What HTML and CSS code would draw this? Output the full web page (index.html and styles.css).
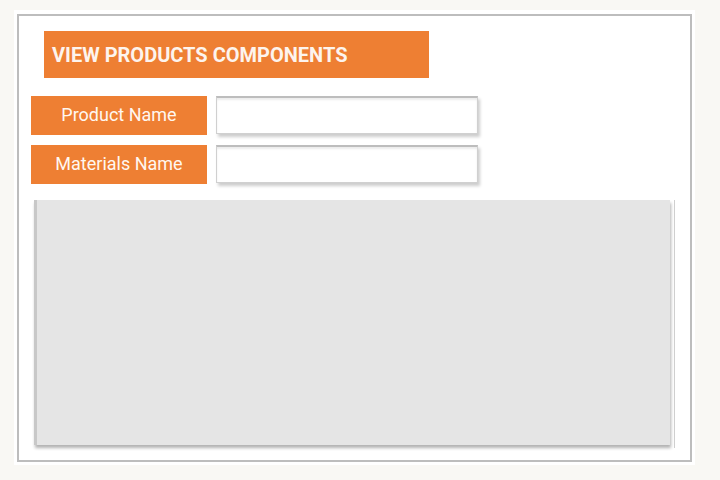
FILE: index.html
```html
<!DOCTYPE html>
<html>
<head>
<meta charset="utf-8">
<link rel="stylesheet" href="styles.css">
</head>
<body>
<div class="frame">
  <div class="panel">
    <div class="title">VIEW PRODUCTS COMPONENTS</div>
    <div class="rows">
      <div class="row">
        <div class="label">Product Name</div>
        <div class="input"></div>
      </div>
      <div class="row">
        <div class="label">Materials Name</div>
        <div class="input"></div>
      </div>
    </div>
    <div class="grid-wrap">
      <div class="grid"></div>
    </div>
  </div>
</div>
</body>
</html>
```

FILE: styles.css
```css
html, body {
  margin: 0;
  padding: 0;
}
body {
  background: #f9f8f4;
  width: 720px;
  height: 480px;
  overflow: hidden;
  font-family: Roboto, "Liberation Sans", sans-serif;
}
.frame {
  margin: 10px 0 0 14px;
  width: 681px;
  height: 455px;
  background: #ffffff;
  padding: 4px 3px 3px 3px;
  box-sizing: border-box;
}
.panel {
  height: 100%;
  border: 2px solid #bdbdbd;
  box-sizing: border-box;
  padding: 15px 0 0 12px;
  display: flex;
  flex-direction: column;
}
.title {
  margin-left: 13px;
  width: 385px;
  height: 47px;
  background: #ee7f33;
  color: #fdf4ee;
  font-weight: 700;
  font-size: 20px;
  line-height: 49px;
  padding-left: 8px;
  box-sizing: border-box;
}
.rows {
  margin-top: 18px;
  display: flex;
  flex-direction: column;
  gap: 10px;
}
.row {
  display: flex;
  gap: 9px;
  align-items: flex-start;
}
.label {
  width: 176px;
  height: 39px;
  background: #ee7f33;
  color: #fff7f0;
  font-size: 18px;
  line-height: 38px;
  text-align: center;
}
.input {
  width: 262px;
  height: 38px;
  background: #fff;
  box-sizing: border-box;
  border: 1px solid #d0d0d0;
  border-top: 2px solid #bdbdbd;
  box-shadow: inset 0 2px 2px rgba(0,0,0,0.08), 2px 3px 3px rgba(0,0,0,0.2);
}
.grid-wrap {
  margin: 16px 0 0 3px;
  width: 641px;
  height: 248px;
  border-right: 1px solid #cfcfcf;
  box-sizing: border-box;
}
.grid {
  width: 636px;
  height: 245px;
  background: #e5e5e5;
  border-left: 3px solid #c8c8c8;
  box-sizing: border-box;
  box-shadow: 1px 3px 3px rgba(0,0,0,0.3);
}
```
